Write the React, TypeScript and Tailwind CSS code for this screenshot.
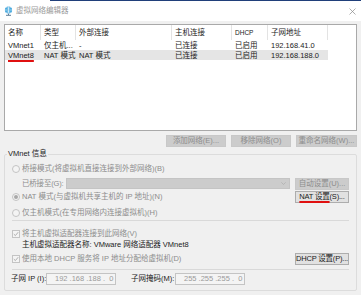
const font = { fontFamily: '"Liberation Sans", "Noto Sans CJK SC", sans-serif' };

function Radio({ checked }: { checked?: boolean }) {
  return (
    <span className="w-[8px] h-[8px] rounded-full border border-[#c4c4c4] bg-[#f4f4f4] flex items-center justify-center shrink-0">
      {checked && <span className="w-[4px] h-[4px] rounded-full bg-[#a8a8a8]" />}
    </span>
  );
}

function Check() {
  return (
    <span className="w-[8px] h-[8px] border border-[#c4c4c4] bg-[#f4f4f4] flex items-center justify-center shrink-0">
      <svg width="6" height="6" viewBox="0 0 6 6">
        <path d="M0.8 3.1 L2.4 4.6 L5.2 1.2" fill="none" stroke="#a8a8a8" strokeWidth="0.9" />
      </svg>
    </span>
  );
}

function DisabledBtn({ children, w = "w-[60px]" }: { children: React.ReactNode; w?: string }) {
  return (
    <div className={`${w} h-[12px] bg-[#cccccc] border border-[#c8c8c8] text-[#8c8c8c] flex items-center justify-center leading-none whitespace-nowrap`}>
      {children}
    </div>
  );
}

function Btn({ children }: { children: React.ReactNode }) {
  return (
    <div className="w-[54px] h-[12px] bg-[#e1e1e1] border border-[#adadad] text-[#1a1a1a] flex items-center justify-center leading-none whitespace-nowrap tracking-[-0.2px]">
      {children}
    </div>
  );
}

const cols = "grid grid-cols-[36px_35px_96px_60px_36px_60px]";

export default function App() {
  return (
    <div className="w-[361px] h-[295px] bg-[#f0f0f0] flex flex-col overflow-hidden text-[7.5px] text-[#1a1a1a]" style={font}>
      <div className="bg-white">
        <div className="h-px ml-[50px] bg-[#203f7a]" />
        <div className="h-[20px] flex items-center pl-[4px] pr-[5px]">
          <svg width="9" height="10" viewBox="0 0 9 10">
            <circle cx="4.5" cy="4" r="3.6" fill="#3aa3dc" />
            <path d="M0.9 4 H8.1 M4.5 0.4 V7.6 M2.2 1.6 Q4.5 3 6.8 1.6 M2.2 6.4 Q4.5 5 6.8 6.4" stroke="#ffffff" strokeWidth="0.6" fill="none" />
            <path d="M4.5 7.6 V9 M2 9.3 H7" stroke="#4a6f8f" strokeWidth="0.9" />
          </svg>
          <span className="ml-[3px] text-[#9a9a9a]">虚拟网络编辑器</span>
          <svg className="ml-auto" width="7" height="7" viewBox="0 0 7 7">
            <path d="M0.5 0.5 L6.5 6.5 M6.5 0.5 L0.5 6.5" stroke="#8a8a8a" strokeWidth="0.7" />
          </svg>
        </div>
      </div>

      <div className="flex-1 flex flex-col px-[4px] pt-[3px]">
        <div className="h-[107px] bg-white border border-[#a9a9a9]">
          <div className={`${cols} h-[15px] items-stretch`}>
            {["名称", "类型", "外部连接", "主机连接", "DHCP", "子网地址"].map((h) => (
              <div key={h} className="flex items-center pl-[3px] border-r border-[#e3e3e3]">
                <span className={h === "DHCP" ? "text-[6.5px]" : ""}>{h}</span>
              </div>
            ))}
          </div>
          <div className={`${cols} h-[10px] items-center`}>
            <span className="pl-[3px]">VMnet1</span>
            <span className="pl-[3px] whitespace-nowrap overflow-hidden">仅主机...</span>
            <span className="pl-[3px]">-</span>
            <span className="pl-[3px]">已连接</span>
            <span className="pl-[3px]">已启用</span>
            <span className="pl-[3px]">192.168.41.0</span>
          </div>
          <div className={`${cols} w-[323px] h-[10px] items-center bg-[#e5e5e5]`}>
            <span className="pl-[3px] underline decoration-[#e01010] decoration-[1.5px] underline-offset-[2px]">VMnet8</span>
            <span className="pl-[3px]">NAT 模式</span>
            <span className="pl-[3px]">NAT 模式</span>
            <span className="pl-[3px]">已连接</span>
            <span className="pl-[3px]">已启用</span>
            <span className="pl-[3px]">192.168.188.0</span>
          </div>
        </div>

        <div className="mt-[4px] flex justify-end gap-[5px]">
          <DisabledBtn>添加网络(E)...</DisabledBtn>
          <DisabledBtn>移除网络(O)</DisabledBtn>
          <DisabledBtn w="w-[61px]">重命名网络(W)...</DisabledBtn>
        </div>

        <fieldset className="mt-[2px] h-[142px] border border-[#dcdcdc] rounded-[2px] px-0 pb-0 pt-0 min-w-0">
          <legend className="ml-[2px] px-[1px] leading-[10px]">VMnet 信息</legend>
          <div className="flex flex-col pl-[7px] pr-[7px] text-[#8c8c8c] whitespace-nowrap">
            <div className="mt-[4px] h-[12px] flex items-center gap-[2px]">
              <Radio />
              <span>桥接模式(将虚拟机直接连接到外部网络)(B)</span>
            </div>
            <div className="mt-[3px] h-[11px] flex items-center">
              <span className="w-[54px] pl-[10px] tracking-[-0.2px]">已桥接至(G):</span>
              <div className="w-[224px] h-[11px] bg-[#cccccc] border border-[#c4c4c4] flex items-center justify-end pr-[3px]">
                <svg width="5" height="3" viewBox="0 0 5 3">
                  <path d="M0.3 0.3 L2.5 2.5 L4.7 0.3" fill="none" stroke="#a8a8a8" strokeWidth="0.6" />
                </svg>
              </div>
              <div className="ml-auto">
                <DisabledBtn w="w-[54px]">自动设置(U)...</DisabledBtn>
              </div>
            </div>
            <div className="mt-[2px] h-[12px] flex items-center gap-[2px]">
              <Radio checked />
              <span>NAT 模式(与虚拟机共享主机的 IP 地址)(N)</span>
              <div className="ml-auto">
                <Btn>
                  <span className="underline decoration-[#e01010] decoration-[1.5px] underline-offset-[2px]">NAT 设置</span>
                  <span>(S)...</span>
                </Btn>
              </div>
            </div>
            <div className="mt-[4px] h-[12px] flex items-center gap-[2px]">
              <Radio />
              <span>仅主机模式(在专用网络内连接虚拟机)(H)</span>
            </div>
            <div className="mt-[1px] h-px bg-[#d9d9d9]" />
            <div className="mt-[7px] h-[12px] flex items-center gap-[2px]">
              <Check />
              <span>将主机虚拟适配器连接到此网络(V)</span>
            </div>
            <div className="h-[10px] flex items-center pl-[10px] text-[#1a1a1a]">
              主机虚拟适配器名称: VMware 网络适配器 VMnet8
            </div>
            <div className="mt-[3px] h-[12px] flex items-center gap-[2px]">
              <Check />
              <span>使用本地 DHCP 服务将 IP 地址分配给虚拟机(D)</span>
              <div className="ml-auto">
                <Btn>DHCP 设置(P)...</Btn>
              </div>
            </div>
            <div className="mt-[4px] h-px bg-[#d9d9d9]" />
            <div className="mt-[3px] h-[12px] flex items-center text-[#1a1a1a]">
              <span className="w-[35px] -ml-[1px]">子网 IP (I):</span>
              <div className="w-[70px] h-[12px] bg-[#f4f4f4] border border-[#c4c4c4] flex items-center pl-[8px] text-[#9a9a9a] whitespace-pre">
                192 .168 .188 .  0
              </div>
              <span className="ml-[15px] w-[44px]">子网掩码(M):</span>
              <div className="w-[70px] h-[12px] bg-[#f4f4f4] border border-[#c4c4c4] flex items-center pl-[8px] text-[#9a9a9a] whitespace-pre">
                255 .255 .255 .  0
              </div>
            </div>
          </div>
        </fieldset>
      </div>
    </div>
  );
}
